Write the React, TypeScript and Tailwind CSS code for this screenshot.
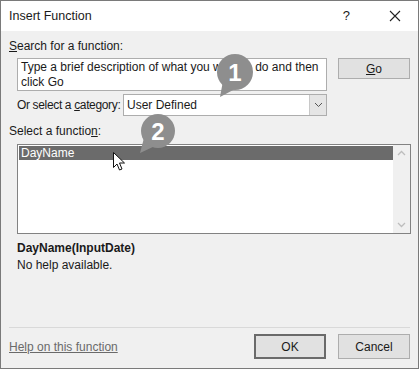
export default function App() {
  return (
    <div className="relative w-[419px] h-[369px] border border-[#7a7a7a] bg-[#f0f0f0] flex flex-col text-[12px] text-[#1a1a1a] font-['Liberation_Sans',Arial,sans-serif] overflow-hidden">
      {/* title bar */}
      <div className="h-[30px] bg-white flex items-center pl-[8px]">
        <span className="text-[12.5px]">Insert Function</span>
        <span className="ml-auto mr-[39px] text-[13px]">?</span>
        <svg width="12" height="12" viewBox="0 0 12 12" className="mr-[17px]">
          <path d="M1 1 L11 11 M11 1 L1 11" stroke="#222" strokeWidth="1.1" />
        </svg>
      </div>

      <div className="flex flex-col px-[8px] flex-1">
        <div className="mt-[7px] leading-[16px]">
          <span className="underline">S</span>earch for a function:
        </div>
        <div className="flex mt-[4px] ml-[8px]">
          <div className="w-[310px] h-[33px] bg-white border border-[#adadad] px-[3px] leading-[15px] pt-[1px]">
            Type a brief description of what you want to do and then click Go
          </div>
          <button className="ml-[11px] w-[72px] h-[21px] bg-[#e1e1e1] border border-[#adadad] flex items-center justify-center">
            <span className="underline">G</span>o
          </button>
        </div>

        <div className="flex items-center mt-[3px] ml-[8px]">
          <span className="w-[106px] leading-[16px] whitespace-nowrap tracking-[-0.35px]">
            Or select a <span className="underline">c</span>ategory:
          </span>
          <div className="w-[204px] h-[22px] bg-white border border-[#adadad] flex items-center">
            <span className="pl-[3px] flex-1">User Defined</span>
            <div className="w-[17px] h-full bg-[#e5e5e5] border-l border-[#c8c8c8] flex items-center justify-center">
              <svg width="9" height="6" viewBox="0 0 9 6">
                <path d="M1 1 L4.5 4.5 L8 1" stroke="#555" strokeWidth="1" fill="none" />
              </svg>
            </div>
          </div>
        </div>

        <div className="mt-[7px] leading-[16px]">
          Select a functio<span className="underline">n</span>:
        </div>
        <div className="mt-[5px] ml-[8px] w-[394px] h-[90px] bg-white border border-[#828282] flex">
          <div className="flex-1 pt-[1px] pl-[1px]">
            <div className="h-[14px] bg-[#6b6b6b] text-white leading-[14px] pl-[2px]">DayName</div>
          </div>
          <div className="w-[17px] bg-[#f0f0f0] flex flex-col items-center justify-between py-[5px]">
            <svg width="9" height="6" viewBox="0 0 9 6">
              <path d="M1 5 L4.5 1.5 L8 5" stroke="#bdbdbd" strokeWidth="1.3" fill="none" />
            </svg>
            <svg width="9" height="6" viewBox="0 0 9 6">
              <path d="M1 1 L4.5 4.5 L8 1" stroke="#bdbdbd" strokeWidth="1.3" fill="none" />
            </svg>
          </div>
        </div>

        <div className="mt-[6px] ml-[8px] leading-[16px] font-bold">DayName(InputDate)</div>
        <div className="ml-[8px] leading-[18px]">No help available.</div>

        <div className="mt-auto border-t border-[#d9d9d9] flex items-center pt-[6px] pb-[9px]">
          <span className="text-[#6a6a6a] underline">Help on this function</span>
          <button className="ml-auto w-[72px] h-[25px] bg-[#e1e1e1] border-2 border-[#6a6a6a]">OK</button>
          <button className="ml-[12px] w-[72px] h-[25px] bg-[#e1e1e1] border border-[#adadad]">Cancel</button>
        </div>
      </div>

      {/* callout 1 */}
      <svg className="absolute left-[214px] top-[52px]" width="42" height="46" viewBox="0 0 42 46">
        <path d="M8 28 L5 44 L20 36 Z" fill="#8e8e8e" />
        <circle cx="20" cy="19" r="18" fill="#8e8e8e" />
        <text x="20" y="28" textAnchor="middle" fill="#fff" fontSize="24" fontWeight="700" fontFamily="Liberation Sans, sans-serif">1</text>
      </svg>
      {/* callout 2 */}
      <svg className="absolute left-[136px] top-[111px]" width="42" height="46" viewBox="0 0 42 46">
        <path d="M7 26 L3 41 L18 34 Z" fill="#8e8e8e" />
        <circle cx="21" cy="19" r="17" fill="#8e8e8e" />
        <text x="21" y="28" textAnchor="middle" fill="#fff" fontSize="24" fontWeight="700" fontFamily="Liberation Sans, sans-serif">2</text>
      </svg>
      {/* cursor */}
      <svg className="absolute left-[112px] top-[151px]" width="14" height="20" viewBox="0 0 14 20">
        <path d="M0.5 0.5 L0.5 15.5 L4 12 L6.5 18 L9 17 L6.5 11 L11.5 11 Z" fill="#fff" stroke="#111" strokeWidth="1" />
      </svg>
    </div>
  );
}
